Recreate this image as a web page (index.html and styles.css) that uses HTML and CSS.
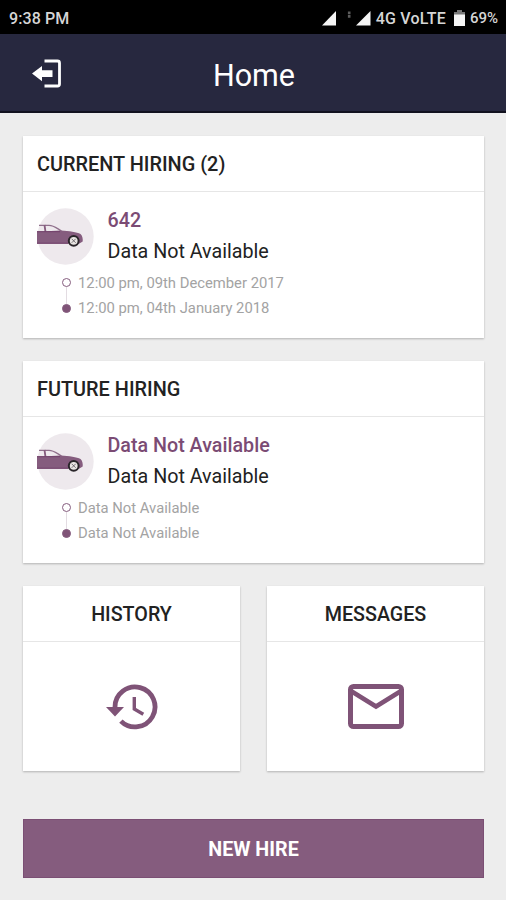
FILE: index.html
```html
<!DOCTYPE html>
<html lang="en">
<head>
    <meta charset="UTF-8">
    <meta name="viewport" content="width=device-width, initial-scale=1.0">
    <title>Home</title>
    <link rel="stylesheet" href="styles.css">
</head>
<body>
    <!-- Shared car drawing -->
    <svg class="defs" width="0" height="0">
        <symbol id="car" viewBox="0 0 57 57">
            <circle cx="28.5" cy="28.5" r="28.2" fill="#eee9ed"/>
            <path d="M2 17.3H12C17 17.3 20 20.5 24.5 23" fill="none" stroke="#8f6f8b" stroke-width="1.3"/>
            <path d="M7.5 17L8.5 24" stroke="#855c7e" stroke-width="1.8"/>
            <path d="M0 23.3H9L24 22.5C32 23 40 24 43.5 26C45.5 27.5 46 31 45.7 33.5L42 35.7H0Z" fill="#855c7e"/>
            <path d="M0 23.7H23M0 35.2H31" stroke="#72406a" stroke-width="1"/>
            <circle cx="36.7" cy="32.8" r="5.9" fill="#292529"/>
            <circle cx="36.7" cy="32.8" r="3.9" fill="#e9e5e3"/>
            <path d="M34.7 30.8L38.7 34.8M38.7 30.8L34.7 34.8" stroke="#5b575a" stroke-width="0.8"/>
        </symbol>
    </svg>

    <div class="status-bar">
        <span class="time">9:38 PM</span>
        <div class="status-icons">
            <svg class="signals" width="49" height="18" viewBox="0 0 49 18">
                <path d="M0 16.5L14 2V16.5Z" fill="#f5f5f5"/>
                <path d="M27.2 2.5V9" stroke="#5c5c5c" stroke-width="2.6" stroke-dasharray="2.8 0.6"/>
                <path d="M34 16.5L48.5 2V16.5Z" fill="#f5f5f5"/>
            </svg>
            <span class="network">4G VoLTE</span>
            <svg class="battery" width="11" height="16" viewBox="0 0 11 16">
                <path d="M3 0H8V2H11V5H0V2H3Z" fill="#777"/>
                <path d="M0 4.5H11V16H0Z" fill="#f5f5f5"/>
            </svg>
            <span class="percent">69%</span>
        </div>
    </div>

    <header class="header">
        <svg class="logout" width="30" height="30" viewBox="0 0 30 30">
            <path d="M12.5 2H25.5Q27.5 2 27.5 4V25Q27.5 27 25.5 27H12.5" fill="none" stroke="#fff" stroke-width="2.8"/>
            <path d="M0 14.5L10 7V11.3H20.5V18H10V22.3Z" fill="#fff"/>
        </svg>
        <h1>Home</h1>
    </header>

    <main class="content">
        <section class="card">
            <h2 class="list-title">CURRENT HIRING (2)</h2>
            <div class="card-body">
                <div class="vehicle">
                    <svg class="car" width="57" height="57"><use href="#car"/></svg>
                    <div class="vehicle-info">
                        <p class="vehicle-name">642</p>
                        <p class="vehicle-model">Data Not Available</p>
                    </div>
                </div>
                <ul class="dates">
                    <li class="from">12:00 pm, 09th December 2017</li>
                    <li class="to">12:00 pm, 04th January 2018</li>
                </ul>
            </div>
        </section>

        <section class="card">
            <h2 class="list-title">FUTURE HIRING</h2>
            <div class="card-body">
                <div class="vehicle">
                    <svg class="car" width="57" height="57"><use href="#car"/></svg>
                    <div class="vehicle-info">
                        <p class="vehicle-name">Data Not Available</p>
                        <p class="vehicle-model">Data Not Available</p>
                    </div>
                </div>
                <ul class="dates">
                    <li class="from">Data Not Available</li>
                    <li class="to">Data Not Available</li>
                </ul>
            </div>
        </section>

        <div class="tiles">
            <section class="card tile">
                <h2>HISTORY</h2>
                <div class="tile-icon">
                    <svg width="52" height="46" viewBox="0 0 52 46">
                        <path d="M9 23A20 20 0 1 1 14.9 37.1" fill="none" stroke="#7f5377" stroke-width="4.8"/>
                        <path d="M0 23H18L9 32.5Z" fill="#7f5377"/>
                        <path d="M28.3 13V25L37.3 30.2" fill="none" stroke="#7f5377" stroke-width="3.4"/>
                    </svg>
                </div>
            </section>
            <section class="card tile">
                <h2>MESSAGES</h2>
                <div class="tile-icon">
                    <svg width="56" height="45" viewBox="0 0 56 45">
                        <rect x="2.5" y="2.5" width="51" height="40" rx="3" fill="none" stroke="#7f5377" stroke-width="5"/>
                        <path d="M3 7L28 22.5L53 7" fill="none" stroke="#7f5377" stroke-width="4.5"/>
                    </svg>
                </div>
            </section>
        </div>

        <button class="new-hire">NEW HIRE</button>
    </main>
</body>
</html>
```

FILE: styles.css
```css
* {
    margin: 0;
    padding: 0;
    box-sizing: border-box;
}

body {
    font-family: Roboto, sans-serif;
    background: #ededed;
    color: #222;
    height: 900px;
    overflow: hidden;
}

.defs {
    display: block;
}

/* Status bar */
.status-bar {
    display: flex;
    justify-content: space-between;
    align-items: center;
    height: 34px;
    padding: 2px 8px 0 9px;
    background: #000;
    color: #d6d6d6;
    font-size: 16px;
    font-weight: 500;
}

.time {
    letter-spacing: 0.1px;
}

.status-icons {
    display: flex;
    align-items: center;
}

.network {
    margin: 0 8px 0 5px;
    letter-spacing: 0.2px;
}

.percent {
    margin-left: 5px;
    font-size: 15px;
}

/* Header */
.header {
    display: grid;
    grid-template-columns: 65px 1fr 63px;
    align-items: center;
    height: 79px;
    background: #27283f;
    border-bottom: 2px solid #12121f;
    color: #fff;
}

.logout {
    margin: 3px 0 0 32px;
}

h1 {
    padding-top: 7px;
    font-size: 30.5px;
    font-weight: 400;
    line-height: 36px;
    text-align: center;
}

.content {
    display: flex;
    flex-direction: column;
    gap: 23px;
    padding: 23px 22px 0 23px;
}

/* Cards */
.card {
    height: 202px;
    background: #fff;
    box-shadow: 0 1px 2px rgba(0, 0, 0, 0.25);
}

h2 {
    height: 56px;
    border-bottom: 1px solid #e6e6e6;
    font-size: 19.7px;
    font-weight: 500;
    line-height: 58px;
    text-align: center;
}

.list-title {
    padding-left: 14px;
    font-size: 19.9px;
    text-align: left;
}

.card-body {
    padding: 16px 14px 0;
}

.vehicle {
    display: flex;
    gap: 13.5px;
}

.vehicle-info {
    padding-top: 1px;
}

.vehicle-name {
    color: #7b4b74;
    font-size: 19.7px;
    font-weight: 500;
    line-height: 24px;
}

.vehicle-model {
    margin-top: 7px;
    font-size: 19.7px;
    line-height: 24px;
}

.dates {
    margin: 5px 0 0 25px;
    list-style: none;
    color: #a3a3a3;
    font-size: 14.8px;
}

.dates li {
    display: flex;
    align-items: center;
    gap: 7px;
    height: 25px;
}

.dates li::before {
    content: "";
    box-sizing: border-box;
    width: 9px;
    height: 9px;
    border: 1.5px solid #855c7e;
    border-radius: 50%;
}

.dates .to {
    position: relative;
}

.dates .to::before {
    margin-top: 2px;
    background: #7f5377;
}

/* Line joining the two dots */
.dates .to::after {
    content: "";
    position: absolute;
    left: 4px;
    top: -8px;
    width: 1px;
    height: 17px;
    background: #e3dce2;
}

/* Tiles */
.tiles {
    display: grid;
    grid-template-columns: 1fr 1fr;
    gap: 27px;
}

.tile {
    height: 185px;
}

.tile-icon {
    display: flex;
    justify-content: center;
    align-items: center;
    height: 129px;
}

.new-hire {
    height: 59px;
    margin-top: 25px;
    padding-top: 2px;
    border: 1px solid #7b4f74;
    background: #855c7e;
    color: #fff;
    font-family: inherit;
    font-size: 19.7px;
    font-weight: 700;
}
```
